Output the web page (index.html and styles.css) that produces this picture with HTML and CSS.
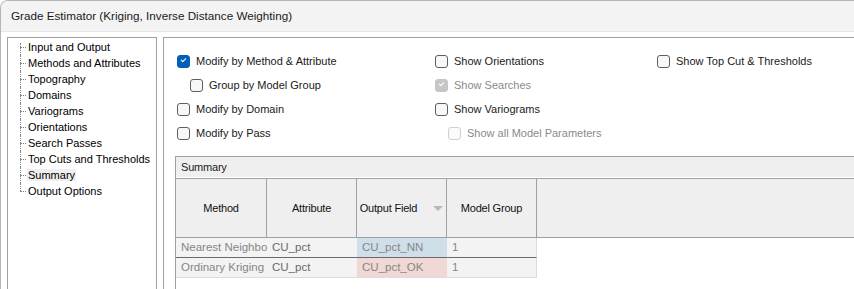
FILE: index.html
```html
<!DOCTYPE html>
<html lang="en">
<head>
    <meta charset="UTF-8">
    <title>Grade Estimator</title>
    <link rel="stylesheet" href="styles.css">
</head>
<body>
    <div class="window">
        <div class="titlebar">Grade Estimator (Kriging, Inverse Distance Weighting)</div>

        <div class="content">
            <div class="nav">
                <ul class="tree">
                    <li>Input and Output</li>
                    <li>Methods and Attributes</li>
                    <li>Topography</li>
                    <li>Domains</li>
                    <li>Variograms</li>
                    <li>Orientations</li>
                    <li>Search Passes</li>
                    <li>Top Cuts and Thresholds</li>
                    <li><span class="selected">Summary</span></li>
                    <li>Output Options</li>
                </ul>
            </div>

            <div class="main">
                <div class="options">
                    <label class="check"><span class="box checked"></span>Modify by Method &amp; Attribute</label>
                    <label class="check"><span class="box"></span>Show Orientations</label>
                    <label class="check"><span class="box"></span>Show Top Cut &amp; Thresholds</label>

                    <label class="check sub"><span class="box"></span>Group by Model Group</label>
                    <label class="check disabled"><span class="box checked"></span>Show Searches</label>
                    <span></span>

                    <label class="check"><span class="box"></span>Modify by Domain</label>
                    <label class="check"><span class="box"></span>Show Variograms</label>
                    <span></span>

                    <label class="check"><span class="box"></span>Modify by Pass</label>
                    <label class="check sub disabled"><span class="box"></span>Show all Model Parameters</label>
                    <span></span>
                </div>

                <div class="summary">
                    <div class="summary-title">Summary</div>
                    <div class="grid-head">
                        <div class="hcell">Method</div>
                        <div class="hcell">Attribute</div>
                        <div class="hcell">Output Field <span class="sort"></span></div>
                        <div class="hcell">Model Group</div>
                        <div class="hcell last"></div>
                    </div>
                    <div class="rows">
                        <div class="row">
                            <div class="cell">Nearest Neighbour</div>
                            <div class="cell dark">CU_pct</div>
                            <div class="cell field-nn">CU_pct_NN</div>
                            <div class="cell">1</div>
                        </div>
                        <div class="row">
                            <div class="cell">Ordinary Kriging</div>
                            <div class="cell dark">CU_pct</div>
                            <div class="cell field-ok">CU_pct_OK</div>
                            <div class="cell">1</div>
                        </div>
                    </div>
                </div>
            </div>
        </div>
    </div>
</body>
</html>
```

FILE: styles.css
```css
body {
    margin: 0;
    background: #ffffff;
    font-family: "Liberation Sans", Arial, sans-serif;
    font-size: 11px;
    color: #1a1a1a;
    overflow: hidden;
}
.window {
    width: 880px;
    height: 300px;
    border-top: 1px solid #b4b4b4;
    border-left: 1px solid #b4b4b4;
    border-top-left-radius: 8px;
    overflow: hidden;
    background: #ffffff;
}
.titlebar {
    height: 30px;
    line-height: 30px;
    padding-left: 10px;
    font-size: 11.7px;
    background: #f3f3f3;
    border-bottom: 1px solid #e6e6e6;
    color: #1a1a1a;
}
.content {
    display: flex;
    gap: 6px;
    padding: 5px 0 0 6px;
}
.nav {
    width: 150px;
    height: 270px;
    box-sizing: border-box;
    border: 1px solid #a0a0a0;
    padding-top: 1px;
}
.tree {
    list-style: none;
    margin: 0;
    padding: 0 0 0 12px;
    font-size: 11px;
    color: #000;
}
.tree li {
    position: relative;
    height: 16px;
    line-height: 16px;
    padding-left: 8px;
}
.tree li::before {
    content: "";
    position: absolute;
    left: 0;
    top: 8px;
    width: 6px;
    border-top: 1px dotted #808080;
}
.tree li::after {
    content: "";
    position: absolute;
    left: 0;
    top: 0;
    bottom: 0;
    border-left: 1px dotted #808080;
}
.tree li:first-child::after {
    top: 4px;
}
.tree li:last-child::after {
    bottom: 8px;
}
.selected {
    background: #efefef;
    padding: 0 1px;
    margin-left: -1px;
}
.main {
    flex: 1;
    height: 270px;
    border: 1px solid #a0a0a0;
    border-right: none;
}
.options {
    display: grid;
    grid-template-columns: 258px 222px 1fr;
    grid-auto-rows: 24px;
    padding: 11px 0 0 13px;
}
.check {
    display: flex;
    align-items: center;
    gap: 6px;
    white-space: nowrap;
}
.check.sub {
    padding-left: 13px;
}
.check.disabled {
    color: #8a8a8a;
}
.box {
    width: 11px;
    height: 11px;
    border: 1px solid #5f5f5f;
    border-radius: 3px;
    background: #f7f7f7;
    position: relative;
}
.box.checked {
    background: #005fb8;
    border-color: #005fb8;
}
.box.checked::after {
    content: "";
    position: absolute;
    left: 3px;
    top: 2px;
    width: 4px;
    height: 2px;
    border-left: 1px solid #fff;
    border-bottom: 1px solid #fff;
    transform: rotate(-45deg);
}
.disabled .box {
    border-color: #cfcfcf;
    background: #fbfbfb;
}
.disabled .box.checked {
    background: #c6c6c6;
    border-color: #c6c6c6;
}
.summary {
    margin: 11px 0 0 11px;
    height: 140px;
    border-top: 1px solid #a0a0a0;
    border-left: 1px solid #a0a0a0;
    font-size: 11px;
    letter-spacing: -0.2px;
}
.summary-title {
    height: 20px;
    line-height: 20px;
    padding-left: 5px;
    background: #efefef;
    border-bottom: 1px solid #ffffff;
}
.grid-head {
    display: grid;
    grid-template-columns: 91px 90px 90px 90px 1fr;
    height: 58px;
    background: #efefef;
    border-top: 1px solid #a0a0a0;
    border-bottom: 1px solid #a0a0a0;
}
.hcell {
    display: flex;
    align-items: center;
    justify-content: center;
    white-space: nowrap;
    border-right: 1px solid #a0a0a0;
    color: #111;
}
.hcell.last {
    border-right: none;
}
.sort {
    width: 0;
    height: 0;
    margin-left: 16px;
    border-left: 5px solid transparent;
    border-right: 5px solid transparent;
    border-top: 5px solid #b8b8b8;
}
.rows {
    width: 361px;
}
.row {
    display: grid;
    grid-template-columns: 91px 90px 90px 90px;
    height: 19px;
    line-height: 19px;
    background: #f3f3f3;
    border-right: 1px solid #dcdcdc;
    border-bottom: 1px solid #dcdcdc;
    font-size: 11.5px;
    letter-spacing: 0;
}
.row:first-child {
    border-bottom-color: #6a6a6a;
}
.cell {
    padding-left: 5px;
    color: #868686;
    overflow: hidden;
    white-space: nowrap;
}
.cell.dark {
    color: #6a6a6a;
}
.field-nn {
    background: #cfdfe9;
}
.field-ok {
    background: #f1d8d4;
}
```
